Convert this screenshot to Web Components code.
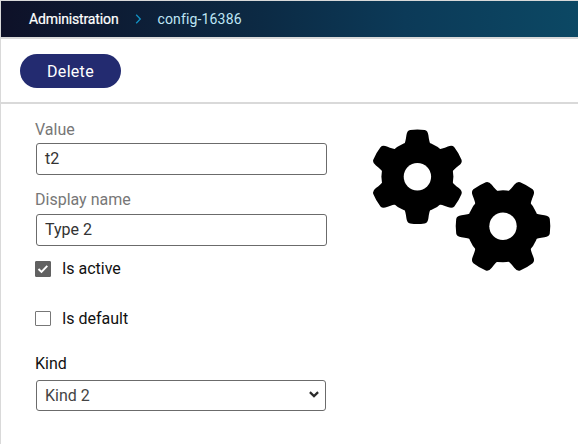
<!DOCTYPE html>
<html lang="en"><head><meta charset="utf-8"><title>Administration</title>
<style>
html,body{margin:0;height:100%;overflow:hidden;background:#fff}
body{font-family:Roboto,"Liberation Sans",sans-serif;font-size:16px;color:#111}
</style></head><body>
<config-page></config-page>
<script>
const define=(name,html,setup)=>customElements.define(name,class extends HTMLElement{
  connectedCallback(){
    if(this.shadowRoot)return;
    this.attachShadow({mode:'open'}).innerHTML='<style>*{box-sizing:border-box}</style>'+html;
    if(setup)setup(this,this.shadowRoot);
  }
});

define('crumb-bar',`<style>
:host{display:flex;box-sizing:border-box;align-items:center;height:39px;padding:0 0 1px 28px;border-top:1px solid #d9d9d9;border-bottom:2px solid #d9d9d9;background:linear-gradient(90deg,#0e1128 0%,#0c2a44 45%,#0c3a58 70%,#0c4864 100%);color:#fff;font-size:14px;line-height:18px}
svg{margin:0 15px 0 17px;width:7px;height:10px}
.here{color:#bfe6f5;letter-spacing:.15px}
.root{-webkit-text-stroke:.2px #fff;letter-spacing:-.14px}
</style><span class="root">Administration</span><svg viewBox="0 0 7 10"><path d="M1.2 .7 5.3 5 1.2 9.3" fill="none" stroke="#1292c4" stroke-width="1.3"/></svg><span class="here"><slot></slot></span>`);

define('action-bar',`<style>
:host{display:flex;box-sizing:border-box;align-items:center;height:65px;padding:0 0 0 19px;border-bottom:2px solid #d9d9d9}
button{width:101px;height:34px;padding:2px 0 0;border:0;border-radius:17px;background:#232b70;color:#fff;font:16px Roboto,sans-serif;letter-spacing:.3px}
</style><button><slot></slot></button>`);

define('text-field',`<style>
:host{display:block;width:292px}
label{display:block;height:20px;line-height:20px;color:#777;white-space:nowrap}
.box{display:flex;align-items:center;height:32px;margin:3px 0 0 1px;padding:0 0 1px 8px;border:1px solid #6b6b6b;border-radius:3px;color:#333;width:291px}
:host(:nth-of-type(2)) .box{margin-top:4px}
</style><label></label><div class="box"><slot></slot></div>`,(h,s)=>{s.querySelector('label').textContent=h.getAttribute('label')});

define('check-row',`<style>
:host{display:flex;align-items:center;height:20px;gap:11px;line-height:20px;letter-spacing:-.02px}
i{display:block;width:16px;height:15px;margin-bottom:1px;border:1px solid #777;border-radius:1px}
svg{display:none;width:14px;height:13px}
:host([checked]) i{background:#616161;border-color:#616161;height:16px;margin:0}
:host([checked]) svg{display:block}
</style><i><svg viewBox="0 0 14 13"><path d="M2.5 7 5.5 10 11.3 3.8" fill="none" stroke="#fff" stroke-width="1.9"/></svg></i><span><slot></slot></span>`);

define('select-field',`<style>
:host{display:block;width:291px}
label{display:block;height:20px;line-height:20px}
.box{display:flex;align-items:center;justify-content:space-between;width:290px;height:31px;margin:6px 0 0 1px;padding:0 6px 0 8px;border:1px solid #6b6b6b;border-radius:3px;color:#444}
svg{width:10px;height:7px;margin-bottom:2px}
</style><label></label><div class="box"><slot></slot><svg viewBox="0 0 10 7"><path d="M.9 1.1 5 5.1 9.1 1.1" fill="none" stroke="#2b2b2b" stroke-width="2.2"/></svg></div>`,(h,s)=>{s.querySelector('label').textContent=h.getAttribute('label')});

define('gear-pair',`<style>:host{display:block;width:178px;height:142px}svg{display:block}</style>
<svg width="178" height="142" viewBox="373 129 178 142"><defs>
<path id="tooth" d="M-14-30C-12.2-34-11.6-37-11-41.5Q-10.4-46.2-7.2-46.8Q0-47.8 7.2-46.8Q10.4-46.2 11-41.5C11.6-37 12.2-34 14-30Z"/>
<mask id="hole"><rect x="-50" y="-50" width="100" height="100" fill="#fff"/><circle r="13.7" fill="#000"/></mask>
<g id="gear" mask="url(#hole)"><circle r="36"/><use href="#tooth"/><use href="#tooth" transform="rotate(60)"/><use href="#tooth" transform="rotate(120)"/><use href="#tooth" transform="rotate(180)"/><use href="#tooth" transform="rotate(240)"/><use href="#tooth" transform="rotate(300)"/></g></defs>
<use href="#gear" transform="translate(417.4 176.8)"/><use href="#gear" transform="translate(503 226.3) rotate(90)"/></svg>`);

define('config-page',`<style>
:host{display:block;box-sizing:border-box;height:444px;border-left:1px solid #d9d9d9}
main{display:flex;padding:15px 0 0 34px}
form{display:flex;flex-direction:column;width:292px;padding-top:1px}
text-field+text-field{margin-top:15px}
gear-pair{margin:10px 0 0 46px}
</style><crumb-bar>config-16386</crumb-bar><action-bar>Delete</action-bar>
<main><form><text-field label="Value">t2</text-field><text-field label="Display name">Type 2</text-field>
<check-row checked style="margin-top:13px">Is active</check-row><check-row style="margin-top:30px">Is default</check-row>
<select-field label="Kind" style="margin-top:25px">Kind 2</select-field></form><gear-pair></gear-pair></main>`);
</script></body></html>
